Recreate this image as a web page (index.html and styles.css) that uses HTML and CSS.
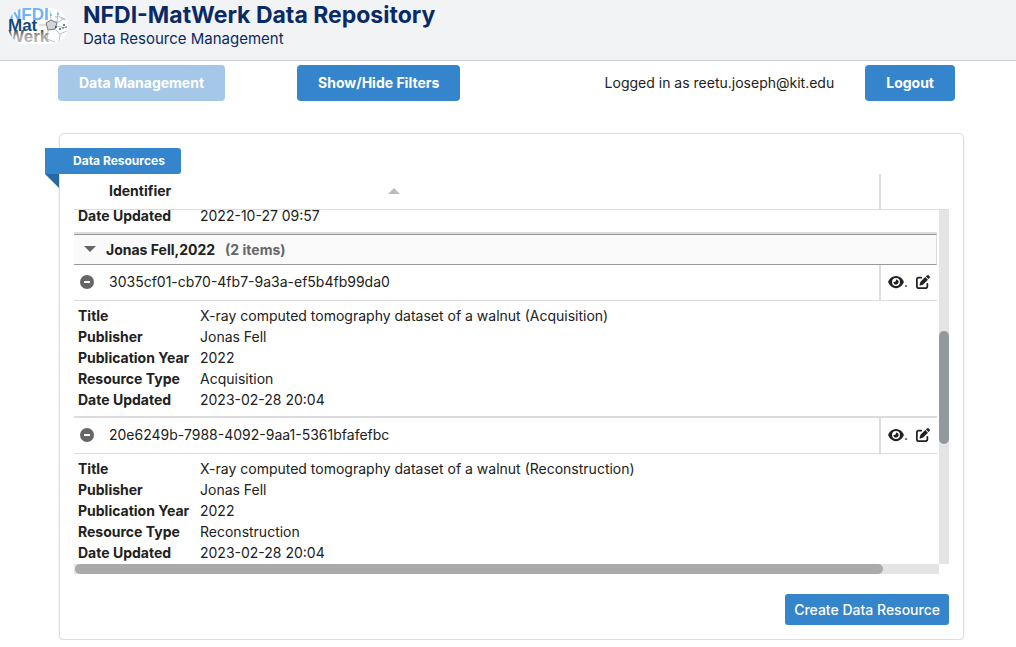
FILE: index.html
```html
<!DOCTYPE html>
<html lang="en">
<head>
<meta charset="utf-8">
<title>NFDI-MatWerk Data Repository</title>
<link rel="stylesheet" href="styles.css">
</head>
<body>
<svg class="symbols" aria-hidden="true">
  <symbol id="minus" viewBox="0 0 14 14"><circle cx="7" cy="7" r="7" fill="#666"/><rect x="4" y="6" width="6" height="2" fill="#fff"/></symbol>
  <symbol id="eye" viewBox="0 0 576 512"><path fill="currentColor" d="M288 32c-80.800 0-145.500 36.800-192.600 80.600C48.600 156 17.300 208 2.500 243.700c-3.300 7.900-3.300 16.700 0 24.600C17.300 304 48.600 356 95.400 399.400 142.500 443.200 207.200 480 288 480s145.500-36.800 192.600-80.600c46.800-43.500 78.100-95.400 93-131.100 3.300-7.900 3.300-16.700 0-24.600-14.900-35.700-46.200-87.700-93-131.100C433.500 68.800 368.800 32 288 32zM144 256a144 144 0 1 1 288 0 144 144 0 1 1-288 0zm144-64c0 35.300-28.700 64-64 64-7.100 0-13.900-1.200-20.300-3.300-5.500-1.800-11.900 1.600-11.700 7.400.3 6.900 1.300 13.800 3.200 20.700 13.700 51.200 66.400 81.600 117.600 67.900s81.600-66.400 67.900-117.600c-11.100-41.500-47.800-69.400-88.600-71.100-5.800-.2-9.200 6.100-7.400 11.700 2.100 6.400 3.300 13.200 3.300 20.300z"/></symbol>
  <symbol id="edit" viewBox="0 0 512 512"><path fill="currentColor" d="M471.600 21.700c-21.900-21.900-57.300-21.900-79.200 0L362.300 51.700l97.900 97.900 30.100-30.100c21.900-21.900 21.900-57.300 0-79.200zM172.400 241.700c-6.100 6.100-10.800 13.600-13.500 21.900l-29.600 88.800c-2.900 8.600-.6 18.100 5.800 24.600s15.900 8.700 24.600 5.800l88.800-29.600c8.200-2.700 15.700-7.400 21.900-13.500L437.700 172.300 339.700 74.300zM96 64C43 64 0 107 0 160v256c0 53 43 96 96 96h256c53 0 96-43 96-96v-96c0-17.700-14.300-32-32-32s-32 14.300-32 32v96c0 17.700-14.300 32-32 32H96c-17.700 0-32-14.300-32-32V160c0-17.700 14.300-32 32-32h96c17.700 0 32-14.300 32-32s-14.300-32-32-32z"/></symbol>
</svg>

<header class="site-header">
  <svg class="logo" viewBox="0 0 60 36" role="img" aria-label="NFDI MatWerk">
    <defs>
      <clipPath id="pill"><rect width="60" height="36" rx="18"/></clipPath>
      <linearGradient id="fade" x1="0" y1="0" x2="0" y2="1"><stop offset=".2" stop-color="#555"/><stop offset=".5" stop-color="#aaa"/><stop offset="1" stop-color="#bbb"/></linearGradient>
    </defs>
    <g clip-path="url(#pill)">
      <rect width="60" height="36" fill="#fff"/>
      <g class="logo-text">
        <text x="1" y="12" fill="#6cb2f8">NFDI</text>
        <text x="0" y="34" fill="url(#fade)">Werk</text>
        <text x="0" y="23" fill="#124a7d">Mat</text>
      </g>
      <path d="M38 15l5-3 6 3-2 6-7 1z" fill="#d2d5d8" stroke="#777"/>
      <path d="M31 17h7M43 12l-1-9M49 15l8-5M47 21l5 5M40 22l-1 9M49 15l1-12M48 18l11 2M52 26l7-3M52 26l-1 8M39 31l8 3M50 8l8 4" fill="none" stroke="#a4a8ac" stroke-width=".7"/>
      <g fill="#55aff3"><circle cx="43" cy="7" r=".9"/><circle cx="48" cy="9" r=".8"/><circle cx="50" cy="6" r=".9"/><circle cx="54" cy="10" r=".7"/><circle cx="48" cy="14" r="1"/></g>
      <g fill="#174978"><circle cx="48" cy="19" r=".9"/><circle cx="52" cy="21" r=".9"/><circle cx="56" cy="17" r=".9"/><circle cx="55" cy="20" r=".8"/><circle cx="58" cy="19" r=".7"/></g>
    </g>
  </svg>
  <div>
    <h1 class="site-title">NFDI-MatWerk Data Repository</h1>
    <p class="site-subtitle">Data Resource Management</p>
  </div>
</header>

<nav class="toolbar">
  <button class="button" type="button" disabled>Data Management</button>
  <button class="button filters" type="button">Show/Hide Filters</button>
  <span class="user">Logged in as reetu.joseph@kit.edu</span>
  <button class="button" type="button">Logout</button>
</nav>

<main class="card">
  <h2 class="ribbon">Data Resources</h2>
  <table class="grid grid-head">
    <colgroup><col><col class="col-actions"></colgroup>
    <thead><tr>
      <th scope="col"><button class="sort" type="button">Identifier<svg width="12" height="6" viewBox="0 0 12 6" aria-hidden="true"><path d="M6 0l6 6H0z" fill="#bbb"/></svg></button></th>
      <th class="actions" aria-label="Actions"></th>
    </tr></thead>
  </table>
  <div class="scroller">
    <div class="viewport">
      <table class="grid grid-body">
        <colgroup><col><col class="col-actions"></colgroup>
        <tbody>
          <tr><td class="details" colspan="2">
            <table class="facts">
              <tr><th scope="row">Date Updated</th><td>2022-10-27 09:57</td></tr>
            </table>
          </td></tr>
          <tr><th class="group" colspan="2"><button class="group-toggle" type="button" aria-expanded="true"><svg width="12" height="6" viewBox="0 0 12 6" aria-hidden="true"><path d="M0 0h12L6 6z" fill="#666"/></svg><span>Jonas Fell,2022</span><span class="count">(2 items)</span></button></th></tr>
          <tr class="record">
            <td><div class="record-id"><button class="icon-button" type="button" aria-label="Collapse"><svg width="14" height="14"><use href="#minus"/></svg></button>3035cf01-cb70-4fb7-9a3a-ef5b4fb99da0</div></td>
            <td class="actions"><div class="action-list"><button class="icon-button" type="button" aria-label="View"><svg width="16" height="14"><use href="#eye"/></svg></button><span class="dot">.</span><button class="icon-button" type="button" aria-label="Edit"><svg width="14" height="14"><use href="#edit"/></svg></button></div></td>
          </tr>
          <tr><td class="details" colspan="2">
            <table class="facts">
              <tr><th scope="row">Title</th><td>X-ray computed tomography dataset of a walnut (Acquisition)</td></tr>
              <tr><th scope="row">Publisher</th><td>Jonas Fell</td></tr>
              <tr><th scope="row">Publication Year</th><td>2022</td></tr>
              <tr><th scope="row">Resource Type</th><td>Acquisition</td></tr>
              <tr><th scope="row">Date Updated</th><td>2023-02-28 20:04</td></tr>
            </table>
          </td></tr>
          <tr class="record">
            <td><div class="record-id"><button class="icon-button" type="button" aria-label="Collapse"><svg width="14" height="14"><use href="#minus"/></svg></button>20e6249b-7988-4092-9aa1-5361bfafefbc</div></td>
            <td class="actions"><div class="action-list"><button class="icon-button" type="button" aria-label="View"><svg width="16" height="14"><use href="#eye"/></svg></button><span class="dot">.</span><button class="icon-button" type="button" aria-label="Edit"><svg width="14" height="14"><use href="#edit"/></svg></button></div></td>
          </tr>
          <tr><td class="details last" colspan="2">
            <table class="facts">
              <tr><th scope="row">Title</th><td>X-ray computed tomography dataset of a walnut (Reconstruction)</td></tr>
              <tr><th scope="row">Publisher</th><td>Jonas Fell</td></tr>
              <tr><th scope="row">Publication Year</th><td>2022</td></tr>
              <tr><th scope="row">Resource Type</th><td>Reconstruction</td></tr>
              <tr><th scope="row">Date Updated</th><td>2023-02-28 20:04</td></tr>
            </table>
          </td></tr>
        </tbody>
      </table>
    </div>
    <div class="track track-y"><div class="thumb thumb-y"></div></div>
    <div class="track track-x"><div class="thumb thumb-x"></div></div>
  </div>
  <div class="card-footer">
    <button class="button create" type="button">Create Data Resource</button>
  </div>
</main>
</body>
</html>
```
FILE: styles.css
```css
* { box-sizing: border-box; }

body {
  margin: 0;
  background: #fff;
  color: #212121;
  font: 14px/21px Inter, "Liberation Sans", sans-serif;
}

button { font: inherit; color: inherit; border: 0; cursor: pointer; }
svg { display: block; }
table { border-collapse: separate; border-spacing: 0; }
th, td { padding: 0; text-align: left; }
.symbols { display: none; }

.site-header {
  display: flex;
  gap: 15px;
  height: 61px;
  padding-left: 8px;
  background: #f2f3f5;
  border-bottom: 1px solid #ccc;
  color: #0a2a66;
}
.logo { width: 60px; height: 36px; margin-top: 8px; }
.logo-text { font: bold 17px "Liberation Sans", sans-serif; }
.site-title { margin: 0; font-size: 23px; font-weight: 700; line-height: 30px; }
.site-subtitle { margin: 0; font-size: 15px; line-height: 17px; }

.toolbar {
  display: flex;
  align-items: center;
  padding: 4px 61px 0 58px;
}
.button {
  padding: 7px 21px 8px;
  border-radius: 4px;
  background: #3585cd;
  color: #fff;
  font-weight: 700;
}
.button:disabled { background: #a5c8e9; cursor: default; }
.filters { margin-left: 72px; }
.user { margin: 0 31px 0 auto; padding-bottom: 2px; }

.card {
  display: flex;
  flex-direction: column;
  margin: 32px 52px 0 59px;
  padding: 14px;
  border: 1px solid #dcdddf;
  border-radius: 5px;
  box-shadow: 0 1px 2px #0002;
}

.ribbon {
  position: relative;
  align-self: flex-start;
  margin: 0 0 0 -29px;
  padding: 0 16px 0 28px;
  border-radius: 0 3px 3px 0;
  background: #3585cd;
  color: #fff;
  font-size: 12px;
  line-height: 26px;
}
.ribbon::after {
  content: "";
  position: absolute;
  top: 100%;
  left: 0;
  border-style: solid;
  border-width: 0 14px 14px 0;
  border-color: transparent #2769a3 transparent transparent;
}

.grid { width: 100%; table-layout: fixed; }
.col-actions { width: 58px; }
.actions { border-left: 2px solid #dcdcdc; }

.grid-head { padding-right: 12px; border-bottom: 1px solid #dcdcdc; }
.grid-head th { height: 35px; padding-bottom: 2px; }
.sort {
  display: flex;
  align-items: center;
  justify-content: space-between;
  width: 326px;
  padding: 0 0 0 35px;
  background: none;
  font-weight: 700;
}

.scroller {
  display: grid;
  grid-template-columns: 1fr 10px;
  grid-template-rows: 354px 10px;
}
.viewport { overflow: hidden; padding-right: 2px; }
.grid-body { margin-top: -9px; }

.details { padding: 4px 4px 6px; border-bottom: 2px solid #dcdcdc; }
.details.last { border-bottom: 0; }
.facts th { width: 122px; font-weight: 700; }

.group {
  border: solid #999;
  border-width: 1px 1px 1px 0;
  border-right-color: #dcdcdc;
  background: #fafafa;
}
.group-toggle {
  display: flex;
  align-items: center;
  gap: 10px;
  height: 29px;
  padding: 0 10px 1px;
  background: none;
  font-weight: 700;
}
.count { color: #666; }

.record td { height: 36px; padding-bottom: 2px; border-bottom: 1px solid #dcdcdc; }
.record-id { display: flex; align-items: center; gap: 15px; padding-left: 6px; }
.icon-button { padding: 0; background: none; }
.action-list { display: flex; align-items: center; padding-left: 7px; }
.dot { width: 12px; }

.track { background: #e4e4e4; }
.thumb { border-radius: 5px; }
.thumb-y { height: 113px; margin-top: 121px; background: #92999c; }
.thumb-x { width: calc(93.5% - 1px); height: 10px; margin-left: 1px; background: #aaa; }

.card-footer { display: flex; justify-content: flex-end; padding-top: 20px; }
.create { padding: 5px 9px; border-radius: 3px; font-weight: 500; }
```
